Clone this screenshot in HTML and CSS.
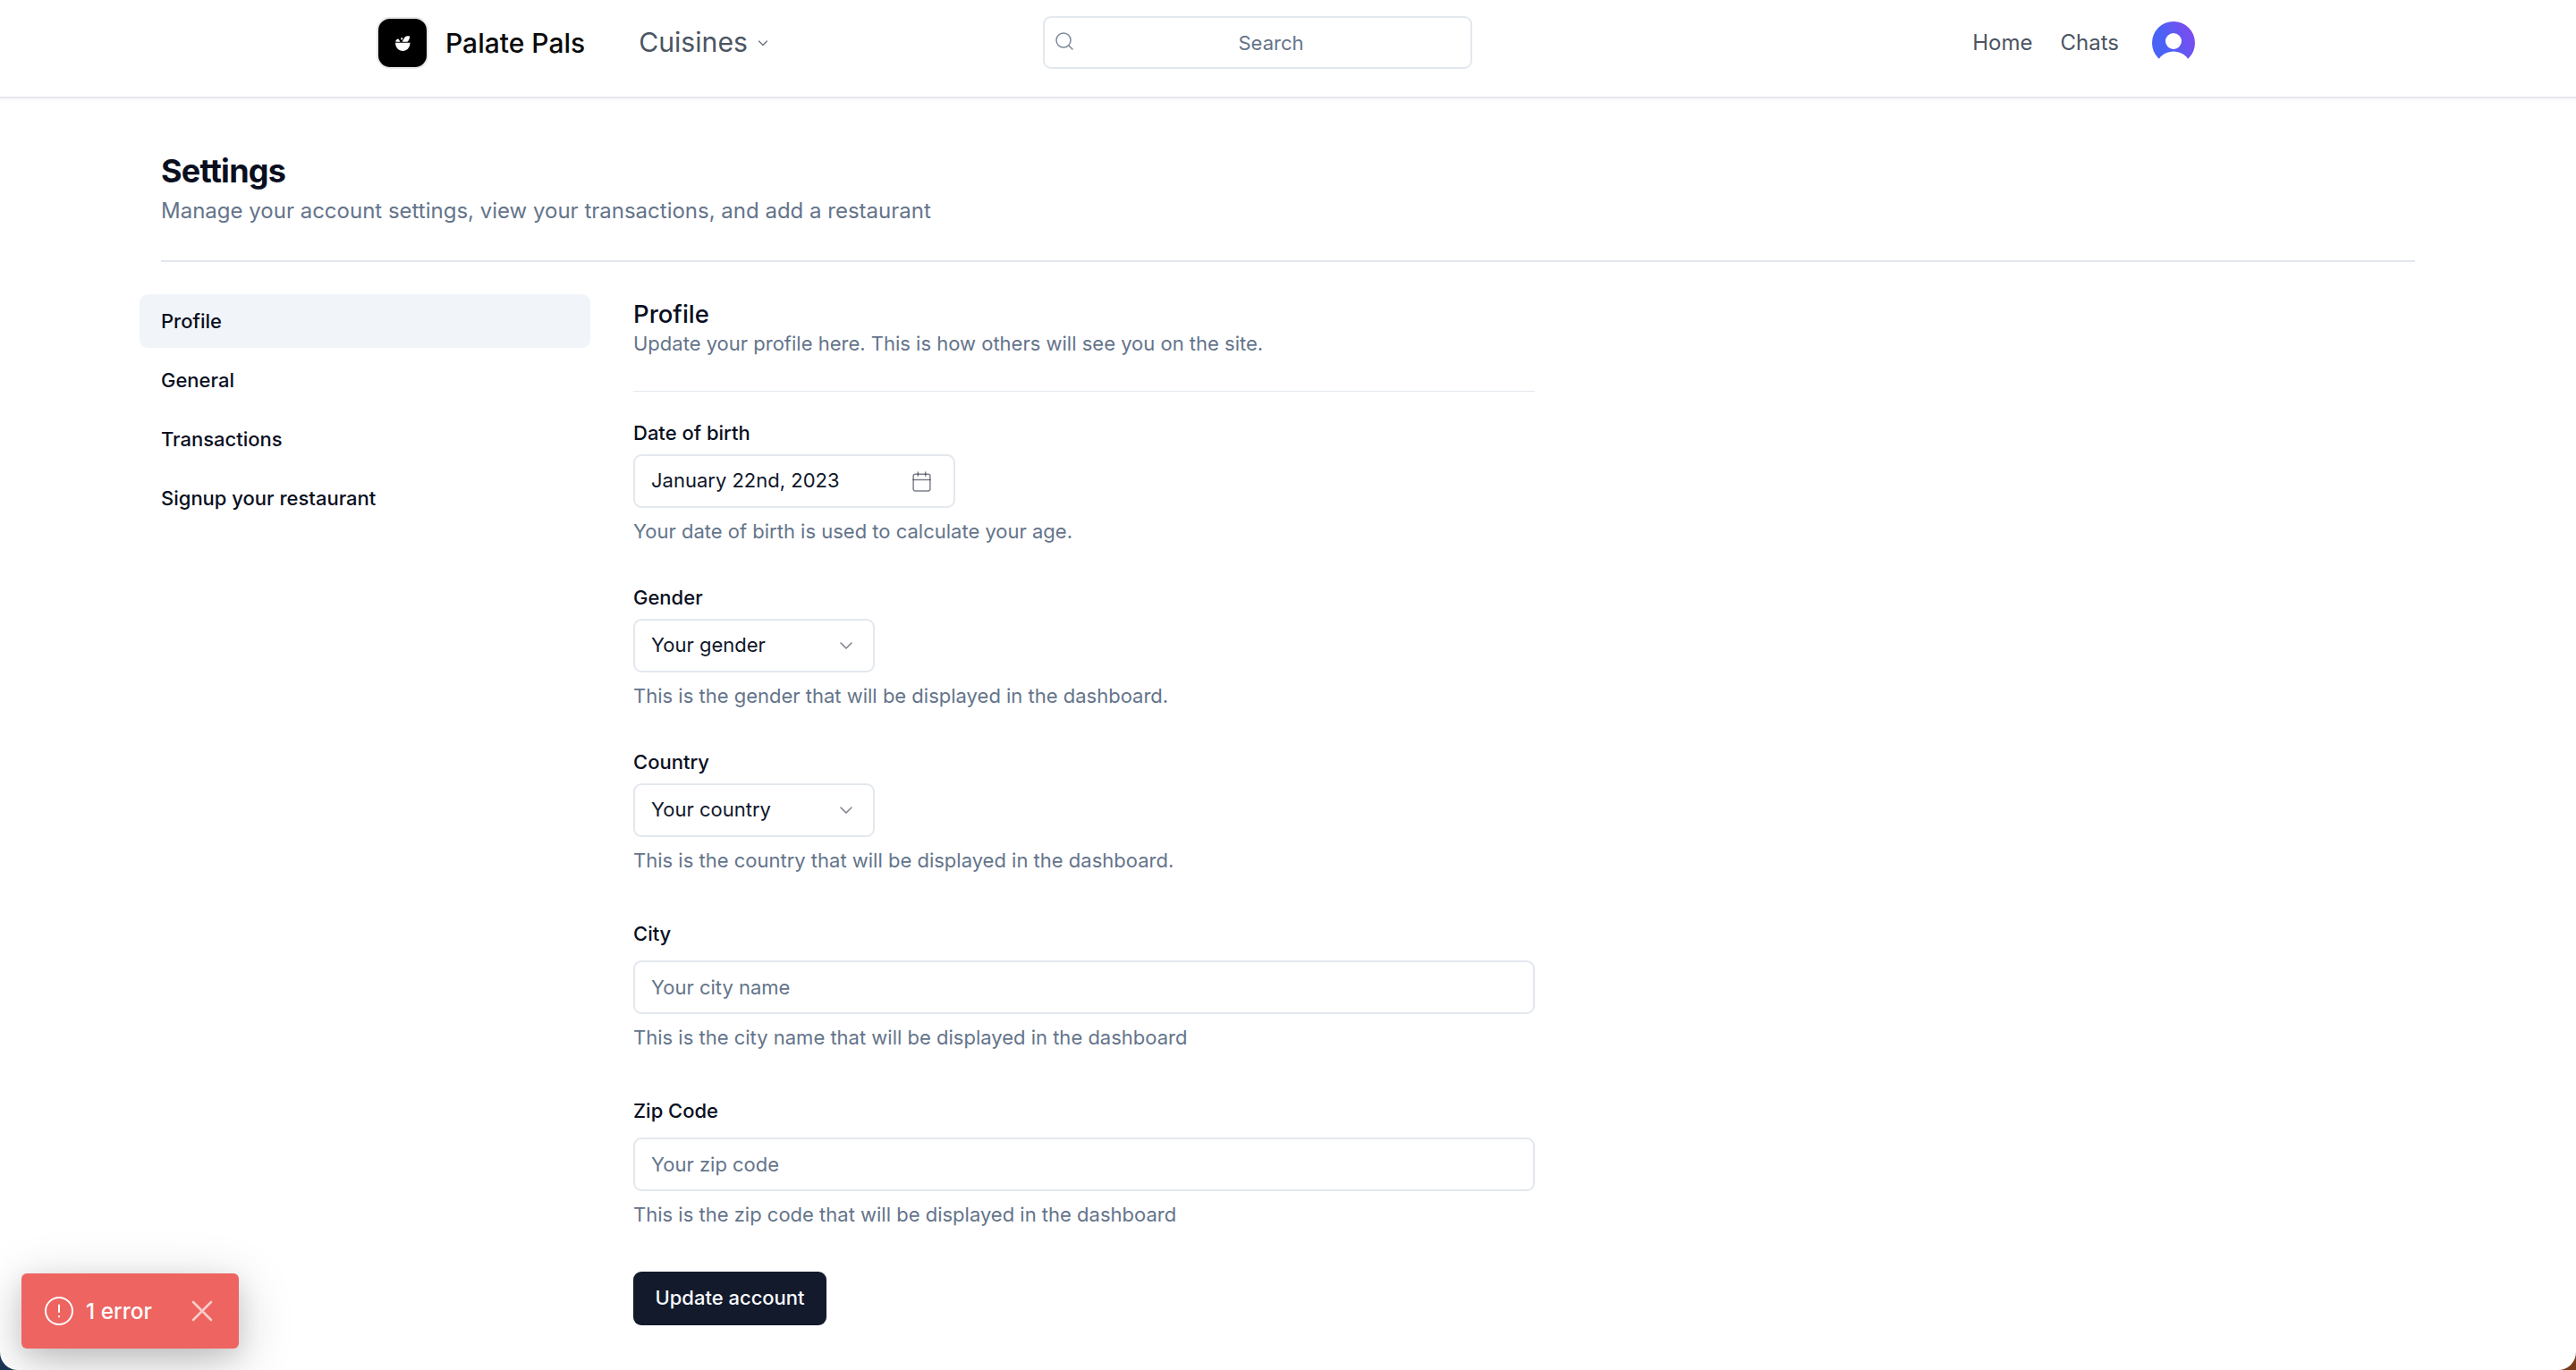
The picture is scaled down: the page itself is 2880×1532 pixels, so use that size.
FILE: index.html
```html
<!DOCTYPE html>
<html lang="en">
<head>
<meta charset="utf-8">
<title>Palate Pals – Settings</title>
<link rel="stylesheet" href="styles.css">
</head>
<body>
<div class="page">
  <header class="topbar">
    <div class="brand-group">
      <a class="brand">
        <span class="logo">
          <svg width="24" height="24" viewBox="0 0 24 24"><path fill="#fff" d="M4 11.800h16.500c0 5.400-3.700 9.200-8.200 9.200S4 17.200 4 11.800z"/><path fill="#fff" d="M4.300 10.800c0-1.900 1.300-3.300 3.200-3.300l2 3.300zM11.500 10.800l2.200-3.800c.6-1 1.300-2.600 2.900-2.600 1 0 2.200-.5 3.300 0 0 1 .4 2.100-.4 3.400-.8 1.200-1 3-2.700 3zM10 7l1.600-1.200.8 1.600-1.400 1.700z"/></svg>
        </span>
        <span class="brand-name">Palate Pals</span>
      </a>
      <a class="cuisines">Cuisines
        <svg class="cuisines-chevron" width="14" height="14" viewBox="0 0 14 14" fill="none" stroke="#6b7280" stroke-width="1.300" stroke-linecap="round" stroke-linejoin="round"><path d="M2.500 5l4.500 4.500L11.500 5"/></svg>
      </a>
    </div>
    <label class="search">
      <svg class="search-icon" width="24" height="24" viewBox="0 0 24 24" fill="none" stroke="#7b879b" stroke-width="1.500" stroke-linecap="round"><circle cx="11" cy="11" r="8"/><path d="M21 21l-4.300-4.300"/></svg>
      <input class="search-input" type="text" placeholder="Search">
    </label>
    <nav class="top-nav">
      <a class="top-link">Home</a>
      <a class="top-link">Chats</a>
      <svg class="avatar" width="48" height="48" viewBox="0 0 48 48">
        <defs><linearGradient id="avatarFill" x1="0" y1="0.700" x2="1" y2="0.300"><stop offset="0.300" stop-color="#4a62f6"/><stop offset="1" stop-color="#7f4bef"/></linearGradient></defs>
        <circle cx="24" cy="24" r="24" fill="url(#avatarFill)"/>
        <circle cx="24" cy="22" r="9" fill="#fff"/>
        <circle cx="24" cy="53.500" r="20" fill="#fff"/>
      </svg>
    </nav>
  </header>

  <main class="settings">
    <div class="settings-head">
      <h1 class="settings-title">Settings</h1>
      <p class="settings-sub">Manage your account settings, view your transactions, and add a restaurant</p>
      <div class="rule"></div>
    </div>
    <div class="settings-body">
      <aside class="side-nav">
        <a class="side-item side-item-active">Profile</a>
        <a class="side-item">General</a>
        <a class="side-item">Transactions</a>
        <a class="side-item">Signup your restaurant</a>
      </aside>
      <section class="profile">
        <h2 class="profile-title">Profile</h2>
        <p class="profile-sub">Update your profile here. This is how others will see you on the site.</p>
        <div class="profile-rule"></div>

        <div class="field field-compact">
          <div class="field-label">Date of birth</div>
          <div class="control control-date"><span class="control-text">January 22nd, 2023</span>
            <svg class="control-icon" width="25" height="25" viewBox="0 0 24 24" fill="none" stroke="#0f172a" stroke-opacity=".55" stroke-width="1.400" stroke-linecap="round" stroke-linejoin="round"><rect x="3" y="4" width="18" height="18" rx="2"/><path d="M16 2v4M8 2v4M3 10h18"/></svg>
          </div>
          <p class="field-help">Your date of birth is used to calculate your age.</p>
        </div>

        <div class="field field-compact">
          <div class="field-label">Gender</div>
          <div class="control control-select"><span class="control-text">Your gender</span>
            <svg class="control-icon" width="24" height="24" viewBox="0 0 24 24" fill="none" stroke="#0f172a" stroke-opacity=".55" stroke-width="1.500" stroke-linecap="round" stroke-linejoin="round"><path d="M6 9l6 6 6-6"/></svg>
          </div>
          <p class="field-help">This is the gender that will be displayed in the dashboard.</p>
        </div>

        <div class="field field-spaced">
          <div class="field-label">Country</div>
          <div class="control control-select"><span class="control-text">Your country</span>
            <svg class="control-icon" width="24" height="24" viewBox="0 0 24 24" fill="none" stroke="#0f172a" stroke-opacity=".55" stroke-width="1.500" stroke-linecap="round" stroke-linejoin="round"><path d="M6 9l6 6 6-6"/></svg>
          </div>
          <p class="field-help">This is the country that will be displayed in the dashboard.</p>
        </div>

        <div class="field field-spaced">
          <div class="field-label field-label-loose">City</div>
          <input class="control control-input" type="text" placeholder="Your city name">
          <p class="field-help">This is the city name that will be displayed in the dashboard</p>
        </div>

        <div class="field field-compact">
          <div class="field-label field-label-loose">Zip Code</div>
          <input class="control control-input" type="text" placeholder="Your zip code">
          <p class="field-help">This is the zip code that will be displayed in the dashboard</p>
        </div>

        <button class="submit" type="button">Update account</button>
      </section>
    </div>
  </main>

  <div class="toast">
    <svg class="toast-icon" width="34" height="34" viewBox="0 0 34 34" fill="none" stroke="#fff" stroke-width="2" stroke-linecap="round"><circle cx="17" cy="17" r="15"/><path d="M17 10.500v7.500M17 23v.2"/></svg>
    <span class="toast-text">1 error</span>
    <svg class="toast-close" width="24" height="24" viewBox="0 0 24 24" fill="none" stroke="#fbcdca" stroke-width="2.600" stroke-linecap="round"><path d="M2 2l20 20M22 2L2 22"/></svg>
  </div>
</div>
</body>
</html>
```

FILE: styles.css
```css
* { box-sizing: border-box; }

html, body {
  margin: 0;
  height: 100%;
}

body {
  background: linear-gradient(90deg, #1c3454 0 50%, #7a3a1c 50% 100%);
  font-family: Inter, "Liberation Sans", sans-serif;
  color: #0f172a;
  overflow: hidden;
}

.page {
  position: relative;
  height: 1532px;
  background: #fff;
  border-radius: 0 0 20px 20px;
  overflow: hidden;
}

/* Top bar */
.topbar {
  height: 110px;
  display: flex;
  align-items: center;
  padding: 0 426px 13px 421px;
  border-bottom: 2px solid #e8e8ef;
  box-shadow: 0 2px 4px rgba(15, 23, 42, 0.04);
  position: relative;
}

.brand-group {
  display: flex;
  align-items: center;
  width: 745px;
}

.brand {
  display: flex;
  align-items: center;
  gap: 19px;
  margin-right: 60px;
}

.logo {
  width: 58px;
  height: 58px;
  border-radius: 15px;
  background: #000;
  border: 2px solid #e6e6e6;
  display: flex;
  align-items: center;
  justify-content: center;
}

.brand-name {
  font-size: 30px;
  font-weight: 500;
  color: #0a0a0a;
  line-height: 1;
}

.cuisines {
  display: flex;
  align-items: center;
  gap: 10px;
  font-size: 30.200px;
  font-weight: 400;
  color: #4b5563;
  line-height: 1;
}

.cuisines-chevron { margin-top: 2px; }

.search {
  position: relative;
  width: 480px;
  height: 59px;
  display: block;
}

.search-icon {
  position: absolute;
  left: 12px;
  top: 16px;
}

.search-input {
  width: 100%;
  height: 100%;
  border: 2px solid #e3e8ee;
  border-radius: 9px;
  padding: 0 18px 0 48px;
  text-align: center;
  font: 400 22px Inter, "Liberation Sans", sans-serif;
  background: transparent;
  outline: none;
}

.search-input::placeholder { color: #64748b; opacity: 1; }

.top-nav {
  margin-left: auto;
  display: flex;
  align-items: center;
}

.top-link {
  font-size: 24px;
  color: #4b5563;
  line-height: 1;
  margin-right: 31px;
}

.avatar { margin-left: 6px; }

/* Settings */
.settings { padding: 58px 156px 0; }

.settings-head { padding: 0 24px; }

.settings-title {
  margin: 0;
  font-size: 36px;
  font-weight: 700;
  line-height: 46px;
  letter-spacing: -0.75px;
  color: #0a0f1f;
}

.settings-sub {
  margin: 4px 0 0;
  font-size: 24px;
  line-height: 36px;
  color: #64748b;
}

.rule {
  height: 2px;
  background: #e3e8ee;
  margin-top: 37px;
}

.settings-body {
  display: flex;
  gap: 48px;
  margin-top: 36px;
}

.side-nav {
  width: 504px;
  display: flex;
  flex-direction: column;
  gap: 6px;
}

.side-item {
  height: 60px;
  padding: 0 24px 1px;
  display: flex;
  align-items: center;
  border-radius: 9px;
  font-size: 22px;
  font-weight: 500;
  color: #0a0f1f;
}

.side-item-active { background: #f1f5f9; }

.profile { width: 1008px; }

.profile-title {
  margin: 4px 0 0;
  font-size: 27.500px;
  font-weight: 500;
  line-height: 36px;
  color: #0a0f1f;
}

.profile-sub {
  margin: 0;
  font-size: 22px;
  line-height: 30px;
  color: #64748b;
}

.profile-rule {
  height: 1px;
  background: #e3e8ee;
  margin: 38px 0 36px;
}

.field-label {
  font-size: 22px;
  font-weight: 500;
  line-height: 21px;
  color: #0a0f1f;
  margin-bottom: 13px;
}

.field-label-loose { margin-bottom: 19px; }

.control {
  height: 60px;
  border: 2px solid #e3e8ee;
  border-radius: 9px;
  font: 400 22px Inter, "Liberation Sans", sans-serif;
  color: #0f172a;
  padding: 0 18px;
  background: #fff;
  display: flex;
  align-items: center;
  justify-content: space-between;
}

.control-text { margin-top: -2px; }

.control-date { width: 360px; }
.control-select { width: 270px; }
.control-date .control-icon { margin-right: 5px; }
.control-input { width: 100%; outline: none; }
.control-input::placeholder { color: #64748b; opacity: 1; }

.field-help {
  margin: 11px 0 0;
  font-size: 22px;
  line-height: 30px;
  color: #64748b;
}

.field-compact { margin-bottom: 49px; }
.field-spaced { margin-bottom: 57px; }

.submit {
  display: block;
  width: 216px;
  height: 60px;
  padding: 0 0 2px;
  border: 0;
  border-radius: 9px;
  background: #131a2c;
  color: #f8fafc;
  font: 500 22px Inter, "Liberation Sans", sans-serif;
}

/* Toast */
.toast {
  position: absolute;
  left: 24px;
  top: 1424px;
  width: 243px;
  height: 84px;
  background: #ed6461;
  border-radius: 6px;
  display: flex;
  align-items: center;
  padding: 0 29px 0 25px;
  box-shadow: 0 15px 60px rgba(0, 0, 0, 0.22), 0 8px 24px rgba(0, 0, 0, 0.1);
}

.toast-text {
  margin-left: 13px;
  font-size: 24.400px;
  font-weight: 500;
  line-height: 1;
  color: #fff;
}

.toast-close { margin-left: auto; }
```
